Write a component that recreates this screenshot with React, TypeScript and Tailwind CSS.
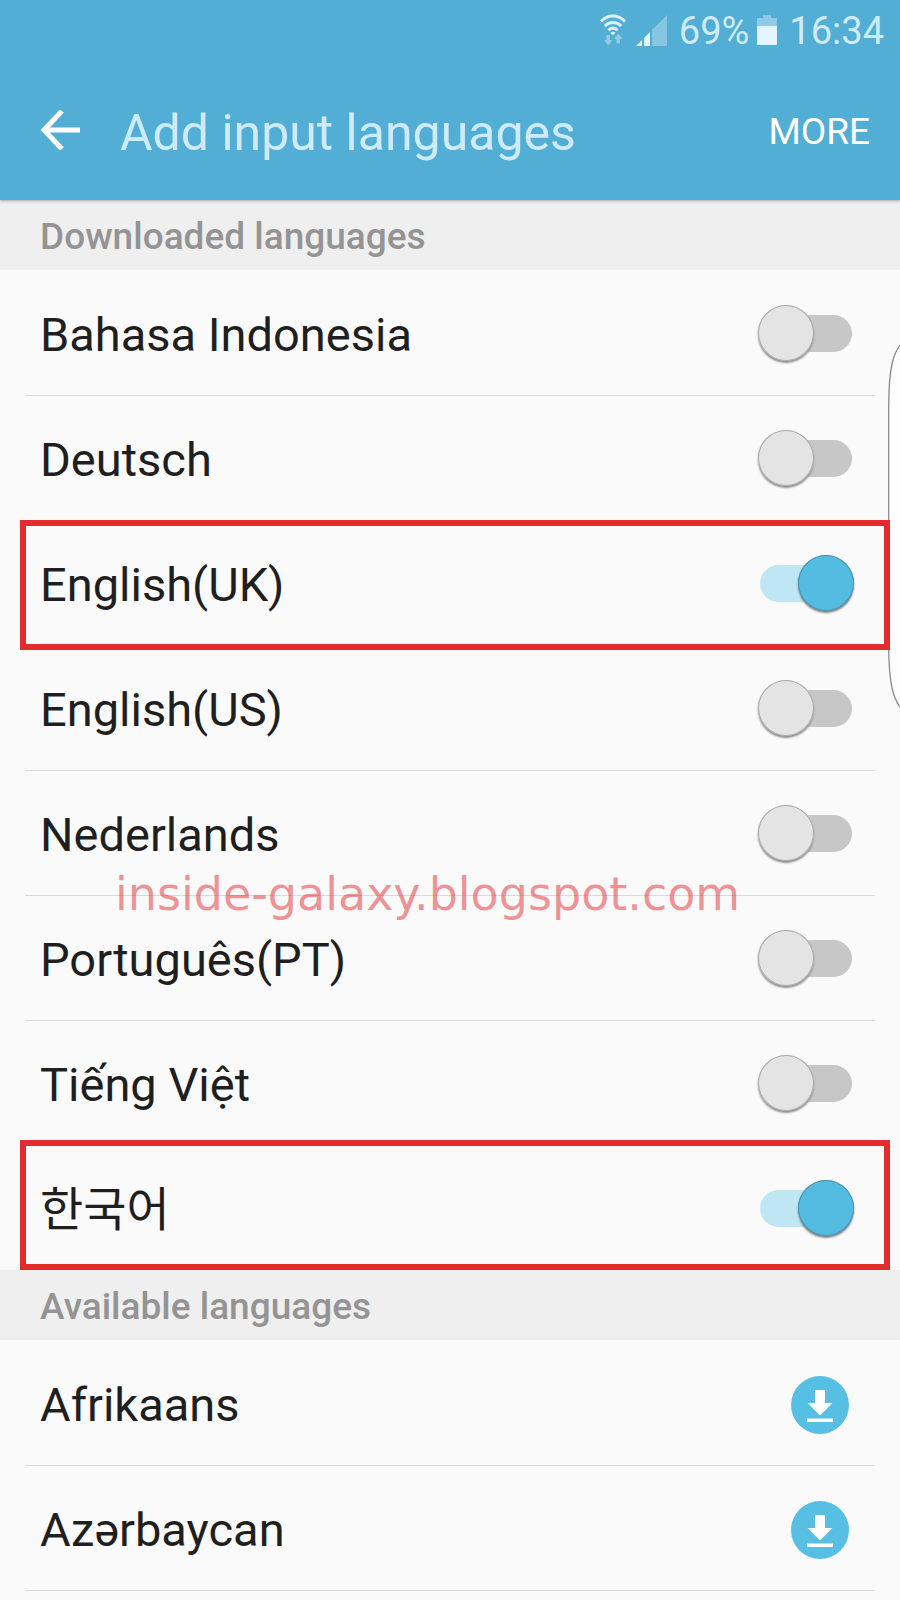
import { useState } from "react";

type Language = { name: string; enabled: boolean; highlight?: "low" | "high" };

const downloaded: Language[] = [
  { name: "Bahasa Indonesia", enabled: false },
  { name: "Deutsch", enabled: false },
  { name: "English(UK)", enabled: true, highlight: "low" },
  { name: "English(US)", enabled: false },
  { name: "Nederlands", enabled: false },
  { name: "Português(PT)", enabled: false },
  { name: "Tiếng Việt", enabled: false },
  { name: "한국어", enabled: true, highlight: "high" },
];

const available = ["Afrikaans", "Azərbaycan"];

function WifiIcon() {
  return (
    <svg width="26" height="32" viewBox="0 0 26 32" fill="none" aria-hidden="true">
      <g stroke="#d9f1fb" strokeWidth="3">
        <path d="M1 7.500C8 .3 18 .3 25 7.500" />
        <path d="M4.800 12C9.500 7.200 16.500 7.200 21.200 12" />
        <path d="M8.400 16.200C11 13.400 15 13.400 17.600 16.200" />
      </g>
      <path d="M10.500 18.800Q13 16.600 15.500 18.800L13 21.600Z" fill="#d9f1fb" />
      <g fill="#8fcbe5">
        <path d="M6.500 21H10V26H12.500L8.200 31.500L4 26H6.500Z" />
        <path d="M16.500 29.500V25H14L18.300 19.500L22.500 25H20V29.500Z" />
      </g>
    </svg>
  );
}

function SignalIcon() {
  return (
    <svg width="31" height="31" viewBox="0 0 31 31" aria-hidden="true">
      <path d="M0 31L6 25V31Z" fill="#e2f4fc" />
      <path d="M8 31V23L14 17V31Z" fill="#e2f4fc" />
      <path d="M16 31V15L31 0V31Z" fill="#85c6e2" />
    </svg>
  );
}

function BatteryIcon() {
  return (
    <svg width="20" height="30" viewBox="0 0 20 30" aria-hidden="true">
      <path d="M0 12V3H6V0H14V3H20V12Z" fill="#8fcbe5" />
      <path d="M0 11H20V30H0Z" fill="#e2f4fc" />
    </svg>
  );
}

function StatusBar() {
  return (
    <div className="flex h-[62px] items-center justify-end pr-4 text-[38px] leading-none text-[#cdebf8]">
      <span className="flex pb-0.5">
        <WifiIcon />
      </span>
      <span className="ml-2.5 flex pb-0.5">
        <SignalIcon />
      </span>
      <span className="ml-3">69%</span>
      <span className="ml-2 flex pb-0.5">
        <BatteryIcon />
      </span>
      <span className="ml-3">16:34</span>
    </div>
  );
}

function AppBar() {
  return (
    <div className="flex h-[138px] items-center pl-10 pr-[30px]">
      <button type="button" aria-label="Back" className="flex pb-0.5">
        <svg width="40" height="40" viewBox="0 0 40 40" fill="none" stroke="#fff" strokeWidth="5" aria-hidden="true">
          <path d="M40 20H4M22 1L4 20L22 39" />
        </svg>
      </button>
      <h1 className="ml-10 grow pt-1 text-[50px] leading-none text-[#cdebf8]">Add input languages</h1>
      <button type="button" className="text-[37px] leading-none text-white">
        MORE
      </button>
    </div>
  );
}

function SectionTitle({ children }: { children: string }) {
  return (
    <h2 className="flex h-[70px] items-center bg-[#efefef] px-10 pt-0.5 text-[37px] leading-none font-medium text-[#949494]">
      {children}
    </h2>
  );
}

function LanguageRow({ language }: { language: Language }) {
  const [on, setOn] = useState(language.enabled);
  return (
    <li className="group relative px-[25px]">
      <label className="flex h-[125px] items-center justify-between border-t border-[#dadada] pl-[15px] pr-[21px] group-first:border-transparent">
        <span className="pt-0.5">{language.name}</span>
        <span className="grid h-14 w-24 items-center">
          <input
            type="checkbox"
            role="switch"
            checked={on}
            onChange={() => setOn(!on)}
            className="peer col-start-1 row-start-1 mx-0.5 h-[37px] appearance-none rounded-full bg-[#c7c7c7] checked:bg-[#bfe6f3]"
          />
          <span className="z-10 col-start-1 row-start-1 size-14 rounded-full bg-[#e4e4e4] shadow-[inset_0_0_0_1px_#a8a8a8,0_2px_2px_#8c8c8c] peer-checked:justify-self-end peer-checked:bg-[#54bbe1] peer-checked:shadow-[inset_0_0_0_1px_#4e91aa,0_2px_2px_#808080]" />
        </span>
      </label>
      {language.highlight === "low" && (
        <div className="pointer-events-none absolute inset-x-5 top-0 z-20 -mr-2.5 h-[130px] border-6 border-[#e22d30]" />
      )}
      {language.highlight === "high" && (
        <div className="pointer-events-none absolute inset-x-5 bottom-0 z-20 -mr-2.5 h-[130px] border-6 border-[#e22d30]" />
      )}
    </li>
  );
}

function DownloadRow({ name }: { name: string }) {
  return (
    <li className="group px-[25px]">
      <div className="flex h-[125px] items-center justify-between border-t border-[#dadada] pl-[15px] pr-[26px] group-first:border-transparent">
        <span className="pt-0.5">{name}</span>
        <button type="button" aria-label={`Download ${name}`} className="flex pt-1">
          <svg width="58" height="58" viewBox="0 0 58 58" aria-hidden="true">
            <circle cx="29" cy="29" r="29" fill="#57bfe4" />
            <path d="M24 14H34V27H41.500L29 39.500L16.500 27H24Z" fill="#fff" />
            <path d="M16 42.500H42V46H16Z" fill="#fff" />
          </svg>
        </button>
      </div>
    </li>
  );
}

function EdgeHandle() {
  return (
    <svg
      className="pointer-events-none absolute top-[344px] right-0"
      width="12"
      height="364"
      viewBox="0 0 12 364"
      fill="#fcfcfc"
      stroke="#8a8a8a"
      strokeWidth="1.300"
      aria-hidden="true"
    >
      <path d="M13 0C5 9 1 25 .7 60V304C1 339 5 355 13 364" />
    </svg>
  );
}

export default function App() {
  return (
    <div className="relative min-h-screen bg-[#fafafa] font-[Roboto,'Noto_Sans_CJK_KR',sans-serif]">
      <header className="relative z-10 bg-[#52aed4] shadow-[0_1px_3px_#0000004d]">
        <StatusBar />
        <AppBar />
      </header>
      <main className="text-[47px] leading-none text-[#1f1f1f]">
        <SectionTitle>Downloaded languages</SectionTitle>
        <ul>
          {downloaded.map((language) => (
            <LanguageRow key={language.name} language={language} />
          ))}
        </ul>
        <SectionTitle>Available languages</SectionTitle>
        <ul>
          {available.map((name) => (
            <DownloadRow key={name} name={name} />
          ))}
        </ul>
        <hr className="mx-[25px] border-[#dadada]" />
      </main>
      <EdgeHandle />
      <p className="pointer-events-none absolute top-[869px] left-[115px] z-30 font-['DejaVu_Sans',sans-serif] text-[46px] leading-[50px] text-[#e02a30]/50">
        inside-galaxy.blogspot.com
      </p>
    </div>
  );
}
